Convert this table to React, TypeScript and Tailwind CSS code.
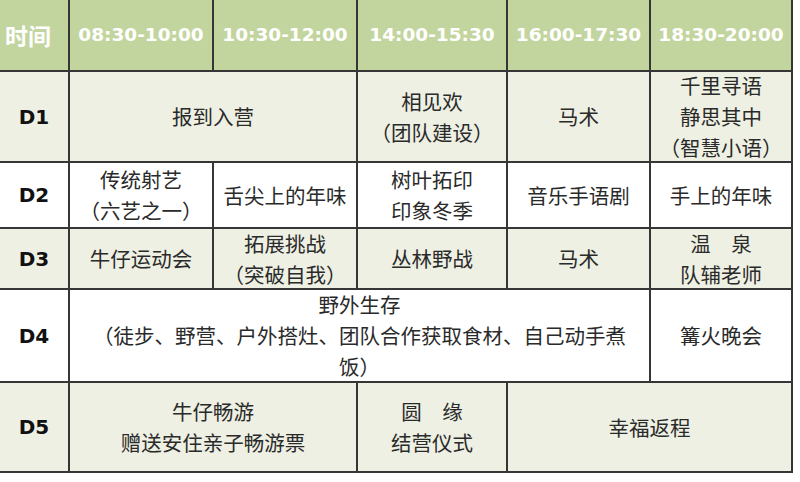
import React from 'react';

type Cell = {
  lines: string[];
  span?: number;
};

const times = ['08:30-10:00', '10:30-12:00', '14:00-15:30', '16:00-17:30', '18:30-20:00'];

// each day: label, row shade, cells
const days: { label: string; light: boolean; cells: Cell[] }[] = [
  {
    label: 'D1',
    light: true,
    cells: [
      { lines: ['报到入营'], span: 2 },
      { lines: ['相见欢', '（团队建设）'] },
      { lines: ['马术'] },
      { lines: ['千里寻语', '静思其中', '（智慧小语）'] },
    ],
  },
  {
    label: 'D2',
    light: false,
    cells: [
      { lines: ['传统射艺', '（六艺之一）'] },
      { lines: ['舌尖上的年味'] },
      { lines: ['树叶拓印', '印象冬季'] },
      { lines: ['音乐手语剧'] },
      { lines: ['手上的年味'] },
    ],
  },
  {
    label: 'D3',
    light: true,
    cells: [
      { lines: ['牛仔运动会'] },
      { lines: ['拓展挑战', '（突破自我）'] },
      { lines: ['丛林野战'] },
      { lines: ['马术'] },
      { lines: ['温　泉', '队辅老师'] },
    ],
  },
  {
    label: 'D4',
    light: false,
    cells: [
      { lines: ['野外生存', '（徒步、野营、户外搭灶、团队合作获取食材、自己动手煮', '饭）'], span: 4 },
      { lines: ['篝火晚会'] },
    ],
  },
  {
    label: 'D5',
    light: true,
    cells: [
      { lines: ['牛仔畅游', '赠送安住亲子畅游票'], span: 2 },
      { lines: ['圆　缘', '结营仪式'] },
      { lines: ['幸福返程'], span: 2 },
    ],
  },
];

const spanClass: Record<number, string> = {
  1: 'col-span-1',
  2: 'col-span-2',
  4: 'col-span-4',
};

const cjk = "font-['Noto_Sans_CJK_SC','Noto_Sans',sans-serif]";
const latin = "font-['DejaVu_Sans','Noto_Sans_CJK_SC',sans-serif]";

export default function App() {
  return (
    <div className="w-[800px] h-[482px] bg-white overflow-hidden">
      <div className="grid w-[793px] grid-cols-[68px_142px_142px_148px_141px_140px] grid-rows-[70px_89px_64px_59px_91px_88px] gap-[2px] bg-[#363636] pr-[2px] pb-[2px]">
        {/* header */}
        <div className={`flex items-center bg-[#c3d59e] pl-[5px] text-[23px] font-bold text-white ${cjk}`}>
          时间
        </div>
        {times.map((t) => (
          <div
            key={t}
            className={`flex items-center justify-center bg-[#c3d59e] text-[18.5px] font-bold text-white ${latin}`}
          >
            {t}
          </div>
        ))}

        {days.map((d) => {
          const bg = d.light ? 'bg-[#eef0e3]' : 'bg-white';
          return (
            <React.Fragment key={d.label}>
              <div
                className={`flex items-center justify-center ${bg} text-[20px] font-bold text-[#111] ${latin}`}
              >
                {d.label}
              </div>
              {d.cells.map((c, i) => (
                <div
                  key={i}
                  className={`flex flex-col items-center justify-center ${bg} ${spanClass[c.span ?? 1]} text-[20.5px] leading-[31px] text-[#2a2a2a] ${cjk}`}
                >
                  {c.lines.map((l, j) => (
                    <span key={j} className="whitespace-nowrap">
                      {l}
                    </span>
                  ))}
                </div>
              ))}
            </React.Fragment>
          );
        })}
      </div>
    </div>
  );
}
